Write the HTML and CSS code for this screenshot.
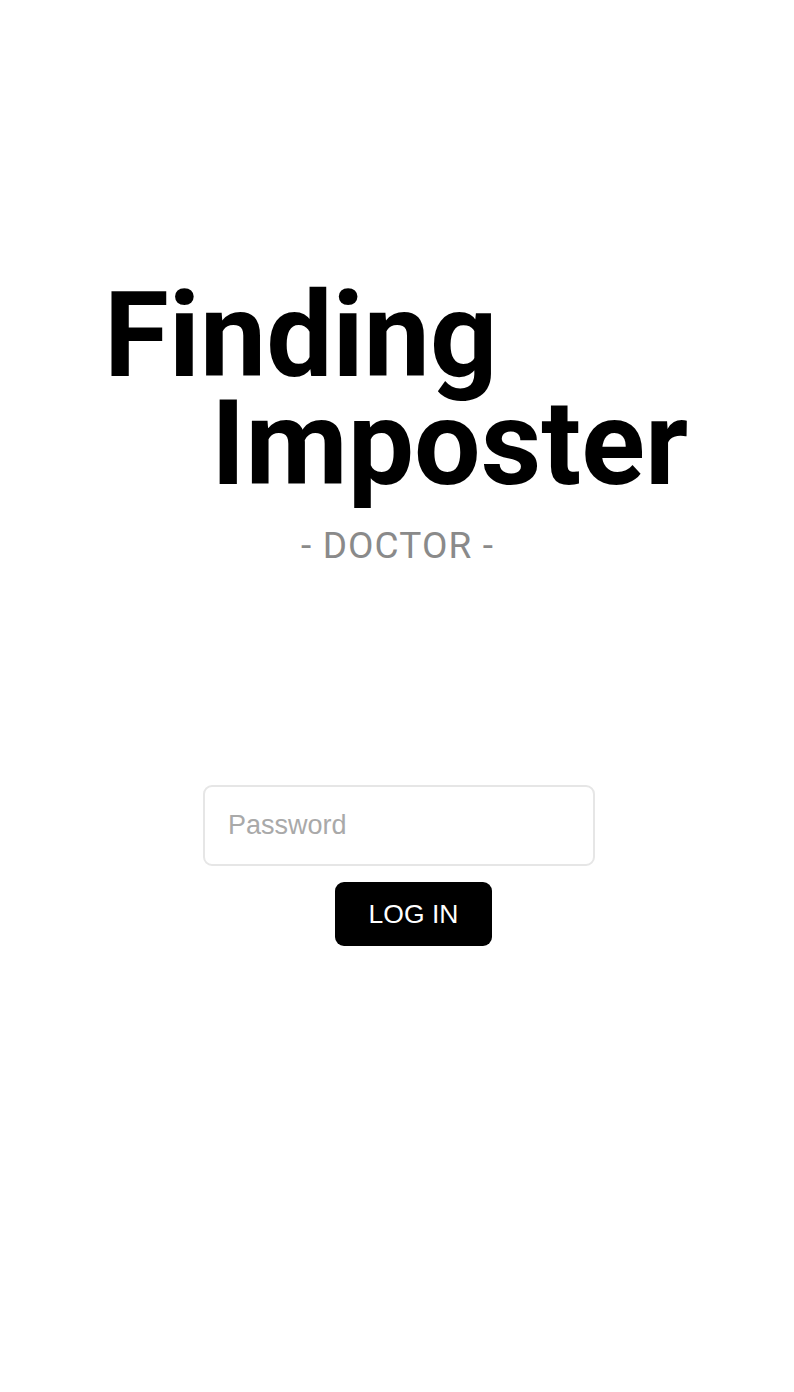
FILE: index.html
```html
<!DOCTYPE html>
<html lang="en">
<head>
<meta charset="utf-8">
<title>Finding Imposter - Doctor</title>
<link rel="stylesheet" href="styles.css">
</head>
<body>
<main class="page">
  <h1 class="title">
    <span class="title-line title-first">Finding</span>
    <span class="title-line title-second">Imposter</span>
  </h1>
  <p class="subtitle">- DOCTOR -</p>
  <form class="login">
    <input class="password" type="password" placeholder="Password">
    <button class="login-btn" type="button">LOG IN</button>
  </form>
</main>
</body>
</html>
```

FILE: styles.css
```css
html, body {
  margin: 0;
  padding: 0;
  background: #ffffff;
}

.page {
  width: 794px;
  min-height: 1392px;
  padding-top: 282px;
  box-sizing: border-box;
  display: flex;
  flex-direction: column;
}

.title {
  margin: 0;
  font-family: Roboto, "Liberation Sans", sans-serif;
  font-weight: 700;
  font-size: 118px;
  line-height: 108px;
  color: #000000;
  display: flex;
  flex-direction: column;
}

.title-line {
  display: block;
  white-space: nowrap;
}

.title-first {
  padding-left: 104px;
}

.title-second {
  padding-left: 211px;
}

.subtitle {
  margin: 26px 0 0 0;
  padding-left: 1px;
  text-align: center;
  font-family: Roboto, "Liberation Sans", sans-serif;
  font-weight: 400;
  font-size: 37px;
  line-height: 43px;
  letter-spacing: 1.1px;
  color: #8a8a8a;
}

.login {
  margin: 218px 0 0 0;
  display: flex;
  flex-direction: column;
  align-items: flex-start;
}

.password {
  margin-left: 203px;
  width: 392px;
  height: 81px;
  box-sizing: border-box;
  border: 2px solid #e6e6e6;
  border-radius: 9px;
  padding: 0 0 0 23px;
  font-family: "Liberation Sans", Arial, sans-serif;
  font-size: 27px;
  color: #333333;
  background: #ffffff;
  outline: none;
}

.password::placeholder {
  color: #a9a9a9;
}

.login-btn {
  margin: 16px 0 0 335px;
  width: 157px;
  height: 64px;
  border: none;
  border-radius: 9px;
  background: #000000;
  color: #ffffff;
  font-family: "Liberation Sans", Arial, sans-serif;
  font-size: 26.5px;
  padding: 0;
  cursor: pointer;
}
```
